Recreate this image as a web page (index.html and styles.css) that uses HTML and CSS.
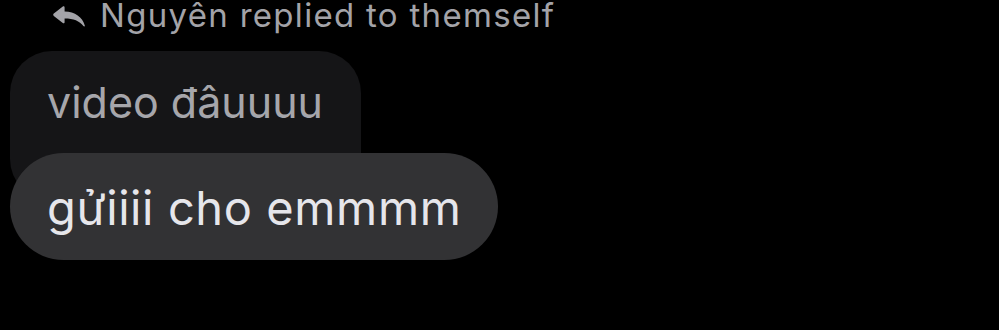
FILE: index.html
```html
<!DOCTYPE html>
<html lang="vi">
<head>
  <meta charset="UTF-8">
  <title>Reply</title>
  <link rel="stylesheet" href="styles.css">
</head>
<body>
  <div class="thread">
    <!-- reply header -->
    <div class="reply-info">
      <svg class="reply-icon" viewBox="0 0 32 21" width="32" height="21">
        <path d="M0.8 7.6 L9.8 0.6 C10.6 0 11.6 0.4 11.6 1.4 L11.6 5.4 C22 5.6 29.5 11 31.8 19.4 C32 20.4 31 20.8 30.4 20.1 C26.5 15 20.5 12.6 11.6 12.6 L11.6 16.2 C11.6 17.2 10.6 17.6 9.8 17 L0.8 10 C0 9.4 0 8.2 0.8 7.6 Z" fill="#a3a3a8"/>
      </svg>
      <span>Nguyên replied to themself</span>
    </div>

    <!-- quoted message -->
    <div class="bubble quoted">video đâuuuu</div>

    <!-- reply message -->
    <div class="bubble reply">gửiiii cho emmmm</div>
  </div>
</body>
</html>
```

FILE: styles.css
```css
body {
  margin: 0;
  background-color: #000;
  font-family: Inter, "Noto Sans", sans-serif;
}

.thread {
  padding-left: 10px;
  display: flex;
  flex-direction: column;
  align-items: flex-start;
}

.reply-info {
  display: flex;
  align-items: center;
  gap: 15px;
  margin-left: 43px;
  height: 34px;
  margin-top: -2px;
  color: #a3a3a8;
  font-size: 33px;
  letter-spacing: 1.3px;
  line-height: 34px;
  white-space: nowrap;
}

.reply-icon {
  margin-top: 2px;
}

.bubble {
  padding-left: 37px;
}

.quoted {
  margin-top: 19px;
  height: 125px;
  padding-top: 25px;
  padding-right: 38px;
  background-color: #151517;
  color: #a6a6ab;
  font-size: 43px;
  line-height: 52px;
  border-radius: 42px;
}

.reply {
  margin-top: -48px;
  height: 57px;
  padding-top: 26px;
  padding-bottom: 24px;
  padding-right: 37px;
  background-color: #323234;
  color: #e6e6eb;
  font-size: 47px;
  letter-spacing: 0.6px;
  line-height: 57px;
  border-radius: 54px;
}
```
